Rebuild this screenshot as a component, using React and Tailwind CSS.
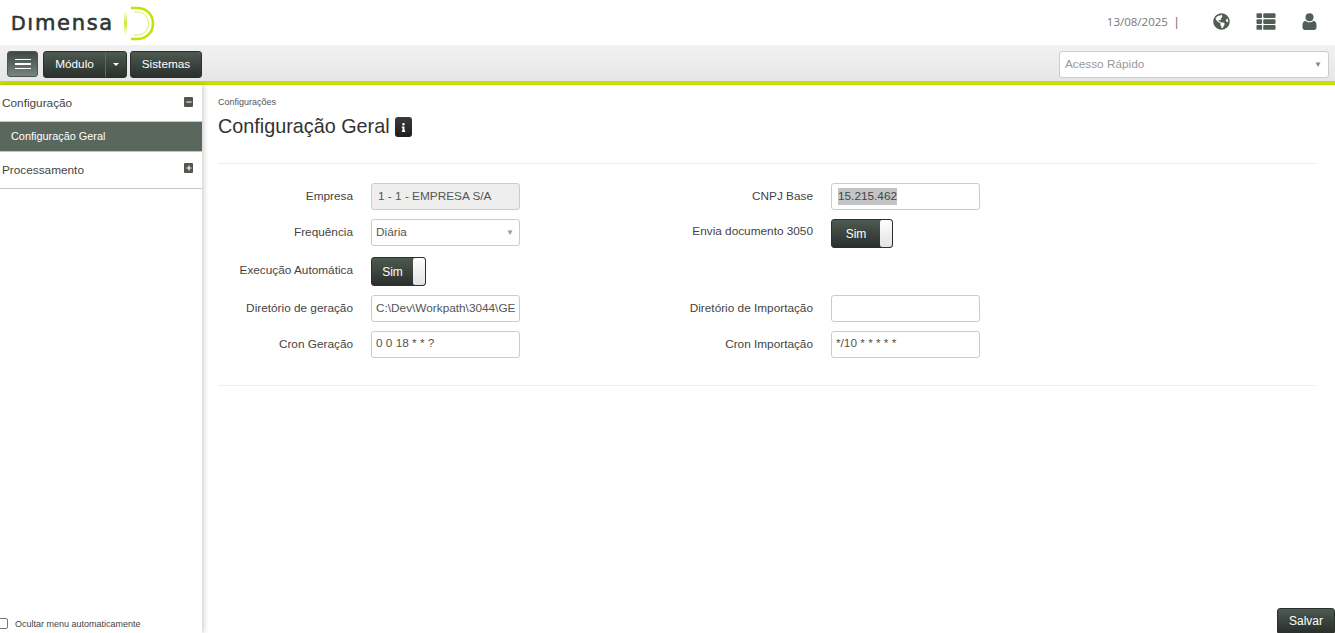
import React from 'react';
import { FaGlobeAmericas, FaThList, FaInfo, FaMinus, FaPlus } from 'react-icons/fa';

const darkBtn = 'bg-gradient-to-b from-[#4d5a52] to-[#2b302c] border border-[#2b302c] text-white';

function Logo() {
  return (
    <div className="flex items-start">
      <span className="mt-[3px] ml-[11px] w-[102px] font-['DejaVu_Sans',sans-serif] text-[21px] leading-[32px] tracking-[1.7px] whitespace-nowrap text-[#2e3733] [-webkit-text-stroke:0.6px_#2e3733]">
        <span className="text-[19px]">D</span>ımensa
      </span>
      <svg width="34" height="36" viewBox="0 0 34 36" fill="none" className="mt-[2px] ml-[11px]">
        <defs>
          <linearGradient id="bar" x1="0" y1="0" x2="0" y2="1">
            <stop offset="0" stopColor="#c6e200" stopOpacity="0.1" />
            <stop offset="0.5" stopColor="#c6e200" stopOpacity="0.8" />
            <stop offset="1" stopColor="#c6e200" stopOpacity="0" />
          </linearGradient>
          <linearGradient id="stem" x1="0" y1="0" x2="0" y2="1">
            <stop offset="0" stopColor="#c6e200" stopOpacity="0.9" />
            <stop offset="0.6" stopColor="#c6e200" stopOpacity="0.25" />
            <stop offset="1" stopColor="#c6e200" stopOpacity="0.9" />
          </linearGradient>
        </defs>
        <rect x="0" y="6" width="3" height="23" fill="url(#bar)" />
        <path d="M7 2V33" stroke="url(#stem)" strokeWidth="2" />
        <path d="M7 2H13C23 2 29 9 29 17.500C29 26 23 33 13 33H7" stroke="#c6e200" strokeWidth="2.500" />
        <path d="M10 6H13C20 6 24.500 11 24.500 17.500C24.500 24 20 29 13 29H10" stroke="#dcee70" strokeWidth="1" />
      </svg>
    </div>
  );
}

function UserIcon() {
  return (
    <svg width="15" height="17" viewBox="0 0 15 17" fill="currentColor" className="mr-[18px] ml-[26px]">
      <circle cx="7.500" cy="4.200" r="4" />
      <path d="M0.500 12C0.500 9.500 2 8 3.500 7.800C4.500 8.800 6 9.300 7.500 9.300C9 9.300 10.500 8.800 11.500 7.800C13 8 14.500 9.500 14.500 12V14.500C14.500 16 13.500 17 12 17H3C1.500 17 0.500 16 0.500 14.500Z" />
    </svg>
  );
}

function Toggle({ className = 'w-[55px]' }) {
  return (
    <div className={`flex h-[29px] items-stretch overflow-hidden rounded-[3px] ${darkBtn} ${className}`}>
      <span className="flex flex-1 items-center justify-center text-[12px]">Sim</span>
      <span className="w-[12px] rounded-[2px] bg-gradient-to-b from-white to-[#e2e2e2]" />
    </div>
  );
}

function Label({ children, className = 'pt-[6px]' }) {
  return <div className={`text-right text-[11.8px] leading-[15px] text-[#444] ${className}`}>{children}</div>;
}

function Field({ children, className = 'bg-white' }) {
  return (
    <div className={`flex h-[27px] items-center overflow-hidden rounded-[3px] border border-[#ccc] px-[4px] text-[11.8px] whitespace-nowrap text-[#555] ${className}`}>
      {children}
    </div>
  );
}

export default function App() {
  return (
    <div className="flex h-[633px] flex-col overflow-hidden bg-white font-['Liberation_Sans',Arial,sans-serif]">
      <header className="flex h-[45px] shrink-0 items-center justify-between">
        <Logo />
        <div className="flex items-center pb-[2px] text-[#505f56]">
          <span className="font-['Open_Sans',sans-serif] text-[11.500px] text-[#777]">13/08/2025</span>
          <span className="ml-[7px] text-[12px] text-[#777]">|</span>
          <FaGlobeAmericas className="ml-[35px] h-[17px] w-[17px]" />
          <FaThList className="ml-[26px] h-[19px] w-[20px]" />
          <UserIcon />
        </div>
      </header>

      <div className="flex h-[40px] shrink-0 items-start justify-between border-b-[4px] border-[#c4e000] bg-gradient-to-b from-[#f2f2f2] to-[#e6e6e6] pt-[6px] pr-[6px] pl-[7px]">
        <div className="flex gap-[3px]">
          <button className="mr-[2px] flex h-[26px] w-[31px] flex-col items-center justify-center gap-[3px] rounded-[3px] border border-[#4a574f] bg-gradient-to-b from-[#3e4a43] to-[#77857e]">
            <span className="h-[1.500px] w-[16px] bg-white" />
            <span className="h-[1.500px] w-[16px] bg-white" />
            <span className="h-[1.500px] w-[16px] bg-white" />
          </button>
          <div className={`flex h-[27px] w-[84px] rounded-[3px] text-[11.800px] ${darkBtn}`}>
            <span className="flex w-[61px] items-center justify-center">Módulo</span>
            <span className="flex flex-1 items-center justify-center border-l border-[#5f6b64]">
              <span className="border-x-[3px] border-t-[3px] border-x-transparent border-t-white" />
            </span>
          </div>
          <div className={`flex h-[27px] w-[72px] items-center justify-center rounded-[3px] text-[11.800px] ${darkBtn}`}>Sistemas</div>
        </div>
        <div className="flex h-[27px] w-[270px] items-center justify-between rounded-[3px] border border-[#ccc] bg-white pr-[6px] pl-[5px] text-[11.800px] text-[#999]">
          <span>Acesso Rápido</span>
          <span className="text-[8px] text-[#888]">▼</span>
        </div>
      </div>

      <div className="flex min-h-0 flex-1">
        <aside className="z-10 flex w-[202px] shrink-0 flex-col bg-white text-[11.800px] text-[#444] shadow-[2px_0_5px_rgba(0,0,0,0.18)]">
          <div className="flex h-[37px] items-center justify-between border-b border-[#c4c4c4] pr-[9px] pl-[2px]">
            <span className="pt-[2px]">Configuração</span>
            <span className="-mt-[2px] flex h-[10px] w-[9px] items-center justify-center rounded-[1px] bg-[#55554f] text-white">
              <FaMinus className="h-[6px] w-[6px]" />
            </span>
          </div>
          <div className="flex h-[29px] items-center bg-[#5a675d] pl-[11px] text-[10.900px] text-white">Configuração Geral</div>
          <div className="flex h-[38px] items-center justify-between border-y border-[#c4c4c4] pr-[9px] pl-[2px]">
            <span className="pt-[2px]">Processamento</span>
            <span className="-mt-[4px] flex h-[10px] w-[9px] items-center justify-center rounded-[1px] bg-[#55554f] text-white">
              <FaPlus className="h-[6px] w-[6px]" />
            </span>
          </div>
          <label className="mt-auto mb-[2px] flex items-center text-[9px] text-[#444]">
            <span className="ml-[-3px] h-[11px] w-[11px] rounded-[2px] border border-[#777] bg-white" />
            <span className="ml-[7px] pt-[2px]">Ocultar menu automaticamente</span>
          </label>
        </aside>

        <main className="flex min-w-0 flex-1 flex-col pl-[16px]">
          <div className="flex-1 pr-[19px]">
            <div className="pt-[12px] text-[9px] leading-[11px] text-[#555]">Configurações</div>
            <div className="mt-[6px] flex h-[24px] items-center">
              <h1 className="text-[19.800px] leading-[24px] text-[#333]">Configuração Geral</h1>
              <span className="mt-[2px] ml-[5px] flex h-[20px] w-[17px] items-center justify-center rounded-[3px] bg-gradient-to-b from-[#3b3b3b] to-[#1f1f1f] text-white">
                <FaInfo className="h-[9px] w-[9px]" />
              </span>
            </div>
            <div className="mt-[25px] border-t border-[#eee]" />
            <div className="mt-[19px] grid grid-cols-[135px_149px_275px_149px] items-start gap-x-[18px] gap-y-[9px]">
              <Label>Empresa</Label>
              <Field className="bg-[#eee] pl-[6px]">1 - 1 - EMPRESA S/A</Field>
              <Label>CNPJ Base</Label>
              <Field><span className="ml-[2px] bg-[#c4c4c4] text-[#444]">15.215.462</span></Field>

              <Label>Frequência</Label>
              <Field className="justify-between bg-white pr-[5px]">
                <span>Diária</span>
                <span className="text-[8px] text-[#999]">▼</span>
              </Field>
              <Label className="pt-[5px]">Envia documento 3050</Label>
              <Toggle className="w-[62px]" />

              <Label>Execução Automática</Label>
              <Toggle />
              <div />
              <div />

              <Label>Diretório de geração</Label>
              <Field>C:\Dev\Workpath\3044\GE</Field>
              <Label>Diretório de Importação</Label>
              <Field />

              <Label>Cron Geração</Label>
              <Field className="bg-white pb-[2px]">0 0 18 * * ?</Field>
              <Label>Cron Importação</Label>
              <Field className="bg-white pb-[2px]">*/10 * * * * *</Field>
            </div>
            <div className="mt-[27px] border-t border-[#eee]" />
          </div>
          <div className="flex justify-end">
            <button className={`h-[25px] w-[58px] rounded-t-[3px] text-[12px] ${darkBtn}`}>Salvar</button>
          </div>
        </main>
      </div>
    </div>
  );
}
